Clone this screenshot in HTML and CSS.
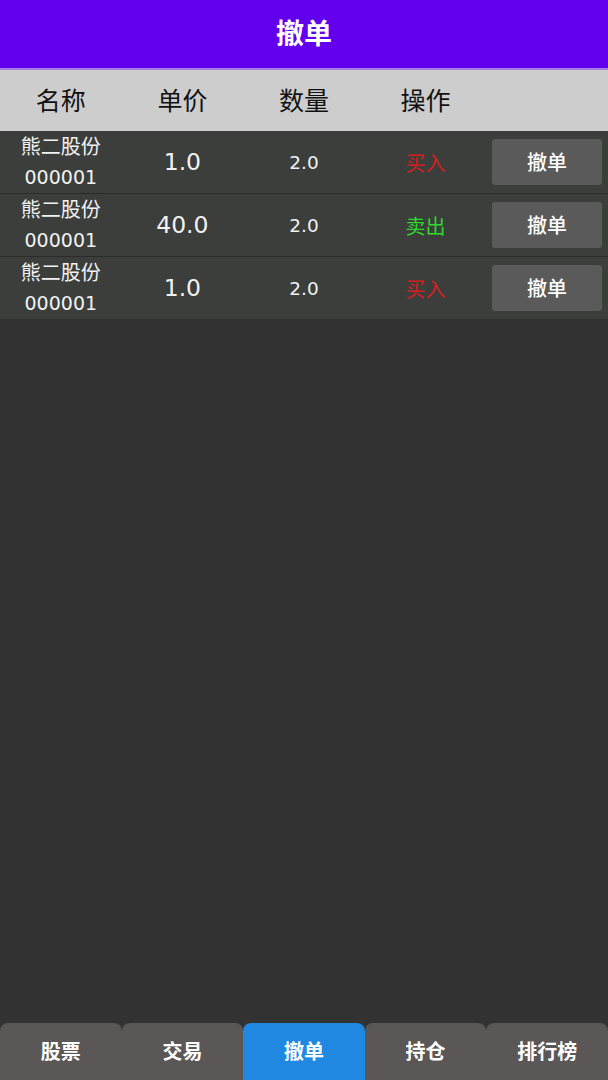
FILE: index.html
```html
<!DOCTYPE html>
<html lang="zh">
<head>
<meta charset="utf-8">
<link rel="stylesheet" href="styles.css">
</head>
<body>
<div class="app">
  <header class="appbar">撤单</header>
  <div class="thead">
    <div class="th">名称</div>
    <div class="th">单价</div>
    <div class="th">数量</div>
    <div class="th">操作</div>
    <div class="th"></div>
  </div>
  <div class="rows">
    <div class="row">
      <div class="cell name"><span>熊二股份</span><span class="code">000001</span></div>
      <div class="cell price">1.0</div>
      <div class="cell qty">2.0</div>
      <div class="cell op buy">买入</div>
      <div class="cell act"><button class="cancel">撤单</button></div>
    </div>
    <div class="row">
      <div class="cell name"><span>熊二股份</span><span class="code">000001</span></div>
      <div class="cell price">40.0</div>
      <div class="cell qty">2.0</div>
      <div class="cell op sell">卖出</div>
      <div class="cell act"><button class="cancel">撤单</button></div>
    </div>
    <div class="row">
      <div class="cell name"><span>熊二股份</span><span class="code">000001</span></div>
      <div class="cell price">1.0</div>
      <div class="cell qty">2.0</div>
      <div class="cell op buy">买入</div>
      <div class="cell act"><button class="cancel">撤单</button></div>
    </div>
  </div>
  <div class="spacer"></div>
  <nav class="tabs">
    <div class="tab">股票</div>
    <div class="tab">交易</div>
    <div class="tab active">撤单</div>
    <div class="tab">持仓</div>
    <div class="tab">排行榜</div>
  </nav>
</div>
</body>
</html>
```

FILE: styles.css
```css
html, body {
  margin: 0;
  padding: 0;
  background: #323232;
}
body {
  font-family: "Noto Sans", "Noto Sans CJK SC", sans-serif;
  color: #fff;
}
.app {
  width: 608px;
  height: 1080px;
  display: flex;
  flex-direction: column;
  overflow: hidden;
}
.appbar {
  height: 64px;
  padding-bottom: 4px;
  background: #6200ee;
  color: #fff;
  font-size: 28px;
  font-weight: 700;
  display: flex;
  align-items: center;
  justify-content: center;
  border-bottom: 2px solid #a87de0;
  box-sizing: content-box;
}
.thead {
  height: 61px;
  background: #cdcdcd;
  display: grid;
  grid-template-columns: repeat(5, 1fr);
  align-items: center;
}
.th {
  text-align: center;
  color: #111;
  font-size: 25px;
  padding-bottom: 3px;
}
.rows {
  display: flex;
  flex-direction: column;
  gap: 1px;
  background: #2a2c2a;
}
.row {
  height: 62px;
  background: #3b3e3b;
  display: grid;
  grid-template-columns: repeat(5, 1fr);
  align-items: center;
}
.cell {
  text-align: center;
  color: #f2f2f2;
}
.name {
  display: flex;
  flex-direction: column;
  align-items: center;
  font-size: 20px;
  line-height: 30px;
}
.code, .price, .qty {
  font-family: "DejaVu Sans", "Noto Sans", sans-serif;
}
.code {
  font-size: 19px;
}
.price {
  font-size: 23.5px;
}
.qty {
  font-size: 18.5px;
}
.op {
  font-size: 20px;
}
.buy {
  color: #d21f1f;
}
.sell {
  color: #2ed82e;
}
.act {
  display: flex;
  justify-content: flex-end;
  padding-right: 6px;
}
.cancel {
  width: 110px;
  height: 46px;
  border: none;
  border-radius: 3px;
  background: #5a5a5a;
  color: #fff;
  font-family: "Noto Sans", "Noto Sans CJK SC", sans-serif;
  font-size: 20px;
  font-weight: 500;
  padding: 0 0 2px;
}
.spacer {
  flex: 1;
}
.tabs {
  height: 57px;
  display: grid;
  grid-template-columns: repeat(5, 1fr);
}
.tab {
  background: #5a5756;
  border-radius: 8px 8px 0 0;
  display: flex;
  align-items: center;
  justify-content: center;
  font-size: 20px;
  font-weight: 700;
  color: #fff;
  padding-bottom: 2px;
}
.tab.active {
  background: #2188e2;
}
```
